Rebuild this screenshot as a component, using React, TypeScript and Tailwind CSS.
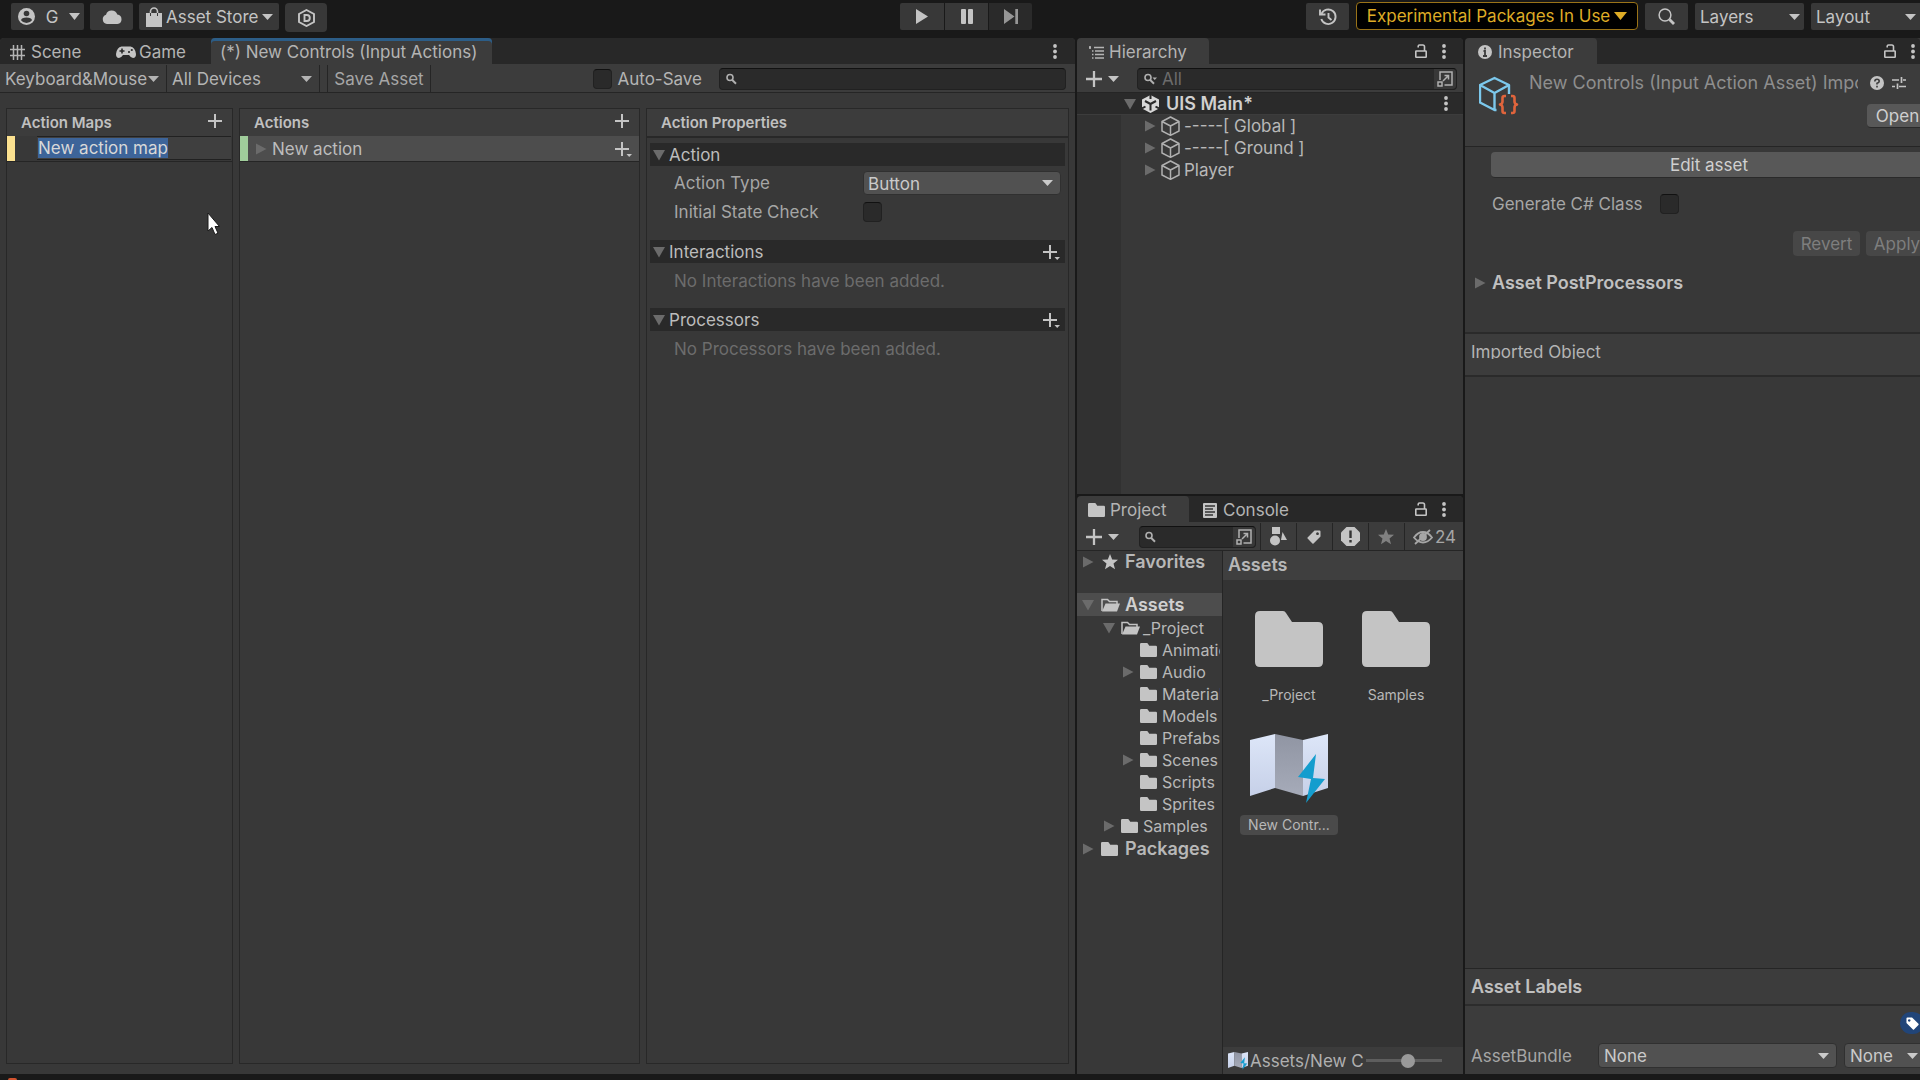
import React from 'react';

type IconProps = { className?: string };

type TreeItem = {
	label: string;
	depth: number;
	arrow?: 'open' | 'closed';
	openFolder?: boolean;
};

const treeItems: TreeItem[] = [
	{ label: '_Project', depth: 1, arrow: 'open', openFolder: true },
	{ label: 'Animations', depth: 2 },
	{ label: 'Audio', depth: 2, arrow: 'closed' },
	{ label: 'Materials', depth: 2 },
	{ label: 'Models', depth: 2 },
	{ label: 'Prefabs', depth: 2 },
	{ label: 'Scenes', depth: 2, arrow: 'closed' },
	{ label: 'Scripts', depth: 2 },
	{ label: 'Sprites', depth: 2 },
	{ label: 'Samples', depth: 1, arrow: 'closed' },
];

const sceneObjects = ['-----[ Global ]', '-----[ Ground ]', 'Player'];

const Caret = ({ className = 'w-[11px] h-[6px]' }: IconProps) => (
	<svg className={`shrink-0 ${className}`} viewBox="0 0 10 6" preserveAspectRatio="none" fill="currentColor" aria-hidden="true">
		<path d="M0 0h10L5 6z" />
	</svg>
);

const Foldout = ({ open = false }: { open?: boolean }) => (
	<svg className="w-3 h-3 shrink-0 text-[#6b6b6b]" viewBox="0 0 12 12" fill="currentColor" aria-hidden="true">
		{open ? <path d="M0 1h12L6 11.5z" /> : <path d="M1 0.5v11L11.5 6z" />}
	</svg>
);

const Plus = ({ className = 'w-[14px] h-[14px]' }: IconProps) => (
	<svg className={`shrink-0 ${className}`} viewBox="0 0 14 14" fill="none" stroke="currentColor" strokeWidth="2" aria-hidden="true">
		<path d="M7 0v14M0 7h14" />
	</svg>
);

const PlusMenu = () => (
	<svg className="w-[17px] h-4 shrink-0" viewBox="0 0 17 16" aria-hidden="true">
		<path d="M7 1v14M0 8h14" fill="none" stroke="currentColor" strokeWidth="2" />
		<path d="M11.500 13h5.500L14.200 16z" fill="currentColor" />
	</svg>
);

const Dots = () => (
	<svg className="w-1 h-[15px] shrink-0" viewBox="0 0 4 15" fill="currentColor" aria-hidden="true">
		<circle cx="2" cy="2" r="1.900" />
		<circle cx="2" cy="7.500" r="1.900" />
		<circle cx="2" cy="13" r="1.900" />
	</svg>
);

const Lock = () => (
	<svg className="w-3 h-[14px] shrink-0" viewBox="0 0 12 14" fill="none" stroke="currentColor" strokeWidth="1.600" aria-hidden="true">
		<rect x="0.800" y="7" width="10.400" height="6.200" rx="0.500" />
		<path d="M3.200 3.500V2.300Q3.200 1 4.500 1h3.300Q9.500 1 9.500 2.800V7" />
	</svg>
);

const SmallSearch = ({ menu = false }: { menu?: boolean }) => (
	<svg className="w-[13px] h-3 shrink-0" viewBox="0 0 13 12" aria-hidden="true">
		<circle cx="4" cy="4.500" r="3" fill="none" stroke="currentColor" strokeWidth="1.600" />
		<path d="M6 6.700l4 4" stroke="currentColor" strokeWidth="2" />
		{menu && <path d="M8.500 4.500H13L10.700 7z" fill="currentColor" />}
	</svg>
);

const OpenSearch = () => (
	<svg className="w-4 h-4 shrink-0" viewBox="0 0 16 16" fill="none" stroke="currentColor" strokeWidth="1.500" aria-hidden="true">
		<path d="M3 9V1h12v13H7.500" />
		<rect x="1" y="11" width="4" height="4" />
		<path d="M6 10l5.500-5.500M7.500 4.500h4v4" />
	</svg>
);

const Folder = ({ className = 'w-[17px] h-[14px]' }: IconProps) => (
	<svg className={`shrink-0 ${className}`} viewBox="0 0 68 56" preserveAspectRatio="none" fill="#c4c4c4" aria-hidden="true">
		<path d="M5 0h23q2 0 3 2l6 9h26q5 0 5 5v35q0 5-5 5H5q-5 0-5-5V5q0-5 5-5z" />
	</svg>
);

const FolderOpen = () => (
	<svg className="w-[19px] h-[14px] shrink-0" viewBox="0 0 19 14" aria-hidden="true">
		<path d="M1 13V1.500h5.500l2 2H16V6" fill="none" stroke="#c4c4c4" strokeWidth="1.500" />
		<path d="M4.500 5.500H19l-3 8H1z" fill="#c4c4c4" />
	</svg>
);

const Star = ({ className = 'text-[#c4c4c4]' }: IconProps) => (
	<svg className={`w-4 h-4 shrink-0 ${className}`} viewBox="0 0 16 16" fill="currentColor" aria-hidden="true">
		<path d="M8 0l2.200 5.400 5.800.4-4.500 3.700 1.500 5.700L8 12.100l-5 3.100 1.500-5.700L0 5.800l5.800-.4z" />
	</svg>
);

const Cube = () => (
	<svg className="w-[19px] h-5 shrink-0" viewBox="0 0 19 20" fill="none" stroke="#b0b0b0" strokeWidth="1.500" strokeLinejoin="round" aria-hidden="true">
		<path d="M9.500 1L18 5.500v9.500l-8.500 4.300L1 15V5.500zM1 5.500L9.500 10 18 5.500M9.500 10v9" />
	</svg>
);

const ActionsAsset = ({ className = 'w-[78px] h-[70px]' }: IconProps) => (
	<svg className={`shrink-0 ${className}`} viewBox="0 0 78 70" aria-hidden="true">
		<defs>
			<linearGradient id="page" x1="0" y1="0" x2="0" y2="1">
				<stop offset="0" stopColor="#dde6f8" />
				<stop offset="1" stopColor="#c6d0e8" />
			</linearGradient>
			<linearGradient id="fold" x1="0" y1="0" x2="0" y2="1">
				<stop offset="0" stopColor="#9095a3" />
				<stop offset="1" stopColor="#a6abb9" />
			</linearGradient>
		</defs>
		<path d="M0 6L25 0v54L0 62z" fill="url(#page)" />
		<path d="M25 0l28 6v56l-28-8z" fill="url(#fold)" />
		<path d="M53 6l25-6v54l-25 8z" fill="url(#page)" />
		<path d="M66 20L48 43l13 2-5 24 19-24-12-1z" fill="#149dce" />
	</svg>
);

const Tag = ({ className = 'w-[14px] h-[14px]' }: IconProps) => (
	<svg className={`shrink-0 ${className}`} viewBox="0 0 14 14" fill="currentColor" fillRule="evenodd" aria-hidden="true">
		<path d="M7.500.5h5q1 0 1 1v5L6.500 13.500Q6 14 5.400 13.400L.6 8.600Q0 8 .6 7.400zM10.500 2.300a1.400 1.400 0 1 0 .01 0z" />
	</svg>
);

type DropProps = {
	label: string;
	value: string;
	className: string;
	caretClass?: string;
};

const Dropdown = ({ label, value, className, caretClass = 'right-[7px]' }: DropProps) => (
	<div className={`relative flex items-center shrink-0 ${className}`}>
		<select aria-label={label} className="w-full h-full appearance-none bg-transparent pl-[5px] outline-none">
			<option>{value}</option>
		</select>
		<span className={`absolute pointer-events-none flex ${caretClass}`}>
			<Caret />
		</span>
	</div>
);

const checkbox = 'appearance-none shrink-0 w-[19px] h-5 rounded-sm bg-[#2a2a2a] border border-[#212121] border-t-[#111111]';
const tabBar = 'flex items-stretch h-[26px] shrink-0 bg-[#282828] rounded-t';
const toolbar = 'flex items-center h-[29px] shrink-0 bg-[#3c3c3c] border-b border-[#252525] pt-px';
const tab = 'flex items-center pt-0.5 whitespace-nowrap';
const activeTab = 'flex items-center pt-0.5 rounded-t bg-[#3c3c3c] whitespace-nowrap';

function TopBar() {
	return (
		<header className="flex items-start justify-between h-[38px] shrink-0 pt-[3px] text-[#c4c4c4]">
			<div className="flex-1 flex items-start pl-[11px] gap-[6px]">
				<button className="flex items-center justify-between w-[73px] h-[27px] pl-[7px] pr-1 bg-[#383838] rounded-xs">
					<svg className="w-[17px] h-[17px]" viewBox="0 0 17 17" aria-hidden="true">
						<circle cx="8.500" cy="8.500" r="8.500" fill="#c4c4c4" />
						<circle cx="8.500" cy="5.500" r="2.800" fill="#383838" />
						<path d="M3 12.200Q3.500 9.500 8.500 9.500T14 12.200Q12 15 8.500 15T3 12.200z" fill="#383838" />
					</svg>
					<span>G</span>
					<Caret className="w-[11px] h-[7px]" />
				</button>
				<button aria-label="Services" className="flex items-center justify-center w-[43px] h-[27px] bg-[#383838] rounded-xs">
					<svg className="w-5 h-[15px]" viewBox="0 0 20 15" fill="currentColor" aria-hidden="true">
						<path d="M5 15a4.800 4.800 0 0 1-1-9.300A6 6 0 0 1 15.300 5.500 4.800 4.800 0 0 1 15.500 15z" />
					</svg>
				</button>
				<button className="flex items-center w-[140px] h-[27px] pl-[7px] gap-1 bg-[#383838] rounded-xs">
					<svg className="w-4 h-5 shrink-0" viewBox="0 0 16 20" aria-hidden="true">
						<path d="M0 6h16v14H0z" fill="currentColor" />
						<path d="M4.500 9V4.500a3.500 3.500 0 0 1 7 0V9" fill="none" stroke="currentColor" strokeWidth="1.600" />
						<path d="M4.500 6v3M11.500 6v3" stroke="#383838" strokeWidth="1" />
					</svg>
					<span className="whitespace-nowrap">Asset Store</span>
					<Caret />
				</button>
				<button aria-label="Diagnostics" className="flex items-center justify-center w-[42px] h-[29px] bg-[#383838] rounded">
					<svg className="w-[17px] h-[18px]" viewBox="0 0 17 18" fill="none" stroke="currentColor" strokeWidth="1.900" aria-hidden="true">
						<path d="M8.500 1L16 5v8l-7.500 4L1 13V5z" />
						<path d="M6.500 6h2.300a3 3 0 0 1 0 6H6.500z" />
					</svg>
				</button>
			</div>

			<div className="flex gap-px mr-[5px]">
				<button aria-label="Play" className="flex items-center justify-center w-[44px] h-[27px] bg-[#383838] rounded-l-xs">
					<svg className="w-3 h-[15px]" viewBox="0 0 12 15" fill="currentColor" aria-hidden="true"><path d="M0 0l12 7.500L0 15z" /></svg>
				</button>
				<button aria-label="Pause" className="flex items-center justify-center w-[43px] h-[27px] bg-[#383838]">
					<svg className="w-3 h-[15px]" viewBox="0 0 12 15" fill="currentColor" aria-hidden="true">
						<rect width="5" height="15" rx="1" />
						<rect x="7" width="5" height="15" rx="1" />
					</svg>
				</button>
				<button aria-label="Step" className="flex items-center justify-center w-[43px] h-[27px] bg-[#2a2a2a] text-[#969696] rounded-r-xs">
					<svg className="w-[14px] h-[15px]" viewBox="0 0 14 15" fill="currentColor" aria-hidden="true"><path d="M0 0l10.500 7.500L0 15zM11.300 0H14v15h-2.700z" /></svg>
				</button>
			</div>

			<div className="flex-1 flex justify-end gap-[7px] -mr-[6px]">
				<button aria-label="Undo History" className="flex items-center justify-center w-[43px] h-[27px] bg-[#383838] rounded-xs">
					<svg className="w-[18px] h-[18px]" viewBox="0 0 18 18" fill="none" stroke="currentColor" strokeWidth="1.900" aria-hidden="true">
						<path d="M2.500 6A7.300 7.300 0 1 1 2.300 11" />
						<path d="M9.500 5v4.500l3 2.500" />
						<path d="M1 1.500v5h5.500" />
					</svg>
				</button>
				<button className="flex items-center justify-center gap-1 w-[282px] h-7 -mt-px rounded bg-black border border-[#9a7318] text-[#deac26] whitespace-nowrap">
					<span>Experimental Packages In Use</span>
					<Caret className="w-[13px] h-[8px]" />
				</button>
				<button aria-label="Search" className="flex items-center justify-center w-[43px] h-[27px] bg-[#383838] rounded-xs">
					<svg className="w-[17px] h-[17px]" viewBox="0 0 17 17" fill="none" stroke="currentColor" aria-hidden="true">
						<circle cx="7" cy="7" r="5.900" strokeWidth="1.500" />
						<path d="M11.500 11.500l4.500 4.500" strokeWidth="2.800" />
					</svg>
				</button>
				<Dropdown label="Layers" value="Layers" className="w-[109px] h-[27px] bg-[#383838] rounded-xs" caretClass="right-1" />
				<Dropdown label="Layout" value="Layout" className="w-[115px] h-[27px] bg-[#383838] rounded-xs" caretClass="right-[10px]" />
			</div>
		</header>
	);
}

function SectionHeader({ title, add = false }: { title: string; add?: boolean }) {
	return (
		<div className="flex items-center h-[23px] pl-[3px] pr-[5px] gap-1 bg-[#292929] text-[#bcbcbc]">
			<Foldout open />
			<h3 className="flex-1">{title}</h3>
			{add && (
				<button aria-label={`Add to ${title}`} className="text-[#c4c4c4]"><PlusMenu /></button>
			)}
		</div>
	);
}

function InputActions() {
	const nameRef = React.useRef<HTMLInputElement>(null);

	React.useEffect(() => {
		nameRef.current?.focus();
		nameRef.current?.select();
	}, []);

	return (
		<main className="flex-1 min-w-0 flex flex-col bg-[#383838] rounded-t overflow-hidden">
			<div className={tabBar}>
				<button className={`${tab} w-[105px] pl-[10px] gap-[6px]`}>
					<svg className="w-[15px] h-[15px]" viewBox="0 0 15 15" fill="none" stroke="#b4b4b4" strokeWidth="1.500" aria-hidden="true">
						<path d="M3.500 0v15M7.500 0v15M11.500 0v15M0 4.500h15M0 10.500h15" />
					</svg>
					Scene
				</button>
				<button className={`${tab} w-[106px] pl-[11px] gap-[3px]`}>
					<svg className="w-5 h-3" viewBox="0 0 20 12" aria-hidden="true">
						<path d="M5.500.5h9Q19 1 20 8q0 4-3 4-2 0-4-3H7q-2 3-4 3-3 0-3-4Q1 1 5.500.5z" fill="#c4c4c4" />
						<path d="M6 2.500v5M3.500 5h5" stroke="#282828" strokeWidth="1.600" />
						<circle cx="13" cy="6" r="1.100" fill="#282828" />
						<circle cx="15.800" cy="4" r="1.100" fill="#282828" />
					</svg>
					Game
				</button>
				<button className={`${activeTab} w-[281px] pl-[9px] shadow-[inset_0_3px_0_#2c5d87]`}>
					(*) New Controls (Input Actions)
				</button>
				<button aria-label="Tab menu" className="ml-auto mr-[18px] text-[#c4c4c4]"><Dots /></button>
			</div>

			<div className={toolbar}>
				<Dropdown label="Control scheme" value="Keyboard&Mouse" className="w-[167px] h-full border-r border-[#252525]" />
				<Dropdown label="Devices" value="All Devices" className="w-[153px] h-full border-r border-[#252525]" />
				<button className="h-full w-[104px] ml-[7px] border-x border-[#252525] text-[#a6a6a6]">Save Asset</button>
				<label className="flex items-center gap-[5px] ml-auto whitespace-nowrap">
					<input type="checkbox" className={checkbox} />
					Auto-Save
				</label>
				<div className="flex items-center w-[347px] h-[22px] ml-[17px] mr-[9px] pl-[6px] gap-1 rounded bg-[#2a2a2a] border border-[#212121] border-t-[#111111] text-[#b0b0b0]">
					<SmallSearch />
					<input aria-label="Search actions" className="flex-1 min-w-0 bg-transparent outline-none" />
				</div>
			</div>

			<div className="flex-1 flex gap-[6px] pt-[15px] px-[6px] pb-[10px]">
				<section className="w-[227px] shrink-0 border border-[#282828]">
					<div className="flex items-center justify-between h-[27px] pl-[14px] pr-[10px] bg-[#3c3c3c]">
						<h2 className="text-[15px] font-semibold text-[#c0c0c0]">Action Maps</h2>
						<button aria-label="Add action map" className="pb-[3px] text-[#c4c4c4]"><Plus /></button>
					</div>
					<div className="flex h-[26px] border-b border-[#252525]">
						<span className="w-2 bg-[#fbe190]" />
						<input
							ref={nameRef}
							aria-label="Action map name"
							defaultValue="New action map"
							className="flex-1 min-w-0 ml-[22px] mr-px h-6 leading-[22px] px-px bg-[#3f3f3f] text-[#d8d8d8] border-y border-[#212121] outline-none selection:bg-[#3d6499] selection:text-[#d8d8d8]"
						/>
					</div>
				</section>

				<section className="flex-[401] min-w-0 border border-[#282828]">
					<div className="flex items-center justify-between h-[27px] pl-[14px] pr-[10px] bg-[#3c3c3c]">
						<h2 className="text-[15px] font-semibold text-[#c0c0c0]">Actions</h2>
						<button aria-label="Add action" className="pb-[3px] text-[#c4c4c4]"><Plus /></button>
					</div>
					<div className="flex items-center h-[26px] pr-[7px] border-b border-[#252525] bg-[#4d4d4d] text-[#bcbcbc]">
						<span className="w-2 self-stretch bg-[#a0cd9b]" />
						<span className="flex ml-[7px] mr-[5px]"><Foldout /></span>
						<span className="flex-1">New action</span>
						<button aria-label="Add binding" className="text-[#c4c4c4]"><PlusMenu /></button>
					</div>
				</section>

				<section className="flex-[423] min-w-0 border border-[#282828]">
					<h2 className="flex items-center h-[29px] pl-[14px] bg-[#3c3c3c] border-b-2 border-[#282828] text-[15px] font-semibold text-[#c0c0c0]">
						Action Properties
					</h2>
					<div className="px-[3px] pt-[5px]">
						<SectionHeader title="Action" />
						<div className="grid grid-cols-[189px_1fr] gap-y-[5px] pl-6 pr-1 pt-[5px] pb-4 items-center text-[#a6a6a6]">
							<label htmlFor="action-type">Action Type</label>
							<div className="relative flex items-center h-6 rounded bg-[#515151] border border-[#303030] text-[#cacaca]">
								<select id="action-type" className="w-full h-full appearance-none bg-transparent pl-1 outline-none">
									<option>Button</option>
								</select>
								<span className="absolute right-[7px] pointer-events-none flex"><Caret /></span>
							</div>
							<label htmlFor="initial-state">Initial State Check</label>
							<input id="initial-state" type="checkbox" className={checkbox} />
						</div>
						<SectionHeader title="Interactions" add />
						<p className="pl-6 pt-[6px] pb-[15px] text-[#6c6c6c]">No Interactions have been added.</p>
						<SectionHeader title="Processors" add />
						<p className="pl-6 pt-[6px] text-[#6c6c6c]">No Processors have been added.</p>
					</div>
				</section>
			</div>
		</main>
	);
}

function Hierarchy() {
	return (
		<section className="h-[456px] shrink-0 flex flex-col bg-[#383838] rounded-t overflow-hidden">
			<div className={tabBar}>
				<button className={`${activeTab} w-[132px] pl-3 gap-[5px]`}>
					<svg className="w-[15px] h-[13px]" viewBox="0 0 15 13" fill="none" stroke="#b4b4b4" strokeWidth="1.600" aria-hidden="true">
						<path d="M0 1.500h2M5 1.500h10M3 5h1.500M6 5h9M3 8.500h1.500M6 8.500h9M3 12h1.500M6 12h9M1 0v3" />
					</svg>
					Hierarchy
				</button>
				<div className="flex items-center gap-[15px] ml-auto mr-[17px] text-[#c4c4c4]">
					<button aria-label="Lock"><Lock /></button>
					<button aria-label="Tab menu"><Dots /></button>
				</div>
			</div>
			<div className={toolbar}>
				<button aria-label="Create" className="flex items-center gap-[6px] ml-[9px] text-[#c4c4c4]">
					<Plus className="w-4 h-4" />
					<Caret />
				</button>
				<div className="flex-1 flex items-center h-[22px] ml-[18px] mr-[6px] pl-[6px] gap-[5px] rounded bg-[#2a2a2a] border border-[#212121] border-t-[#111111] text-[#b0b0b0]">
					<SmallSearch menu />
					<input aria-label="Search hierarchy" placeholder="All" className="flex-1 min-w-0 bg-transparent outline-none placeholder:text-[#6c6c6c]" />
					<button aria-label="Open in search" className="flex items-center h-full px-[3px] rounded-r bg-[#383838]"><OpenSearch /></button>
				</div>
			</div>
			<div className="flex items-center h-[22px] shrink-0 pl-[47px] pr-[15px] bg-[#2a2a2a] border-b border-[#3c3c3c] text-[18px] font-semibold text-[#d0d0d0]">
				<Foldout open />
				<svg className="w-[17px] h-[18px] ml-[6px] mr-[7px]" viewBox="0 0 17 18" aria-hidden="true">
					<path d="M8.500 0L17 4.500v9L8.500 18 0 13.500v-9z" fill="#d8d8d8" />
					<path d="M8.500 9v6.500M8.500 9L3 6M8.500 9L14 6" stroke="#2a2a2a" strokeWidth="2" />
					<path d="M8.500 0v4M0 13.500l3.500-2M17 13.500l-3.500-2" stroke="#2a2a2a" strokeWidth="2" />
				</svg>
				<span className="flex-1">UIS Main*</span>
				<button aria-label="Scene menu" className="text-[#c4c4c4]"><Dots /></button>
			</div>
			<div className="flex-1 flex">
				<div className="w-11 bg-[#313131]" />
				<ul className="flex-1 pl-[23px]">
					{sceneObjects.map((name) => (
						<li key={name} className="flex items-center h-[22px] text-[#b8b8b8]">
							<Foldout />
							<span className="flex ml-[5px] mr-1"><Cube /></span>
							{name}
						</li>
					))}
				</ul>
			</div>
		</section>
	);
}

function Project() {
	const filter = 'flex items-center justify-center w-9 h-full border-l border-[#252525]';
	return (
		<section className="flex-1 min-h-0 flex flex-col bg-[#383838] rounded-t overflow-hidden">
			<div className={tabBar}>
				<button className={`${activeTab} w-[112px] pl-[11px] gap-[5px]`}>
					<Folder />
					Project
				</button>
				<button className={`${tab} pl-[14px] gap-[6px]`}>
					<svg className="w-[14px] h-[15px]" viewBox="0 0 14 15" aria-hidden="true">
						<rect width="14" height="15" rx="1" fill="#c4c4c4" />
						<path d="M2 3h10M2 6h8M2 9h10M2 12h8" stroke="#333333" strokeWidth="1.300" />
					</svg>
					Console
				</button>
				<div className="flex items-center gap-[15px] ml-auto mr-[17px] text-[#c4c4c4]">
					<button aria-label="Lock"><Lock /></button>
					<button aria-label="Tab menu"><Dots /></button>
				</div>
			</div>
			<div className={`${toolbar} text-[#c4c4c4]`}>
				<button aria-label="Create" className="flex items-center gap-[6px] ml-[9px] mr-5">
					<Plus className="w-4 h-4" />
					<Caret />
				</button>
				<div className="flex-1 min-w-0 flex items-center h-[22px] mr-1 pl-[5px] rounded bg-[#2a2a2a] border border-[#212121] border-t-[#111111] text-[#b0b0b0]">
					<SmallSearch />
					<input aria-label="Search project" className="flex-1 min-w-0 bg-transparent outline-none" />
					<button aria-label="Open in search" className="flex items-center h-full px-[3px] rounded-r bg-[#383838]"><OpenSearch /></button>
				</div>
				<button aria-label="Search by type" className={filter}>
					<svg className="w-[17px] h-[19px]" viewBox="0 0 17 19" fill="currentColor" aria-hidden="true">
						<path d="M2 0h8v7H2zM12.500 5L17 13h-6z" />
						<circle cx="5" cy="13.500" r="5" />
					</svg>
				</button>
				<button aria-label="Search by label" className={filter}><Tag /></button>
				<button aria-label="Search by import log" className={filter}>
					<svg className="w-[19px] h-[19px]" viewBox="0 0 19 19" aria-hidden="true">
						<path d="M5.500 0h8L19 5.500v8L13.500 19h-8L0 13.500v-8z" fill="#c4c4c4" />
						<path d="M9.500 3.500v7.500M9.500 13v2.500" stroke="#333333" strokeWidth="2.400" />
					</svg>
				</button>
				<button aria-label="Save search" className={filter}><Star className="text-[#808080]" /></button>
				<button aria-label="Hidden packages" className="flex items-center h-full pl-2 pr-[7px] gap-0.5 border-l border-[#252525] text-[#a6a6a6]">
					<svg className="w-5 h-4" viewBox="0 0 20 16" fill="none" stroke="currentColor" strokeWidth="1.800" aria-hidden="true">
						<path d="M1 8.500Q5 3 10 3t9 5.500Q15 13.500 10 13.500T1 8.500zM2 15L17 1" />
						<circle cx="10" cy="8" r="3" fill="currentColor" />
					</svg>
					24
				</button>
			</div>

			<div className="flex-1 min-h-0 flex">
				<nav className="w-[146px] shrink-0 overflow-hidden border-r border-[#252525] text-[#b8b8b8]">
					<div className="flex items-center h-[22px] mb-5 pl-[5px] text-[18px] font-semibold">
						<Foldout />
						<span className="flex ml-2 mr-[7px]"><Star /></span>
						Favorites
					</div>
					<div className="flex items-center h-[23px] pl-[5px] bg-[#4d4d4d] text-[18px] font-semibold text-[#d0d0d0]">
						<Foldout open />
						<span className="flex ml-[7px] mr-[5px]"><FolderOpen /></span>
						Assets
					</div>
					<ul className="mr-0.5 pt-px overflow-hidden text-[16px]">
						{treeItems.map((item) => (
							<li key={item.label} className={`flex items-center h-[22px] whitespace-nowrap ${item.depth === 2 ? 'pl-[45px]' : 'pl-[26px]'}`}>
								<span className="flex w-3 shrink-0 mr-[6px]">
									{item.arrow && <Foldout open={item.arrow === 'open'} />}
								</span>
								<span className="flex w-[22px] shrink-0">{item.openFolder ? <FolderOpen /> : <Folder />}</span>
								{item.label}
							</li>
						))}
					</ul>
					<div className="flex items-center h-[23px] pl-[5px] text-[18px] font-semibold">
						<Foldout />
						<span className="flex ml-[7px] mr-[7px]"><Folder /></span>
						Packages
					</div>
				</nav>

				<div className="flex-1 min-w-0 flex flex-col bg-[#333333]">
					<h2 className="flex items-center h-[29px] shrink-0 pl-[5px] pb-px bg-[#3f3f3f] text-[18px] font-semibold text-[#b8b8b8]">Assets</h2>
					<ul className="flex-1 flex flex-wrap content-start gap-x-[9px] gap-y-5 pl-[17px] pt-[21px] text-[14px] leading-5 text-[#b8b8b8]">
						{['_Project', 'Samples'].map((name) => (
							<li key={name} className="flex flex-col items-center justify-between w-[98px] h-[104px] pt-[10px]">
								<Folder className="w-[68px] h-[56px]" />
								{name}
							</li>
						))}
						<li className="flex flex-col items-center justify-between w-[98px] h-[110px] pt-[9px]">
							<ActionsAsset />
							<span className="w-full text-center rounded bg-[#4a4a4a]">New Contr...</span>
						</li>
					</ul>
					<footer className="flex items-center h-[27px] shrink-0 pl-[5px] pr-[22px] gap-0.5 bg-[#3c3c3c] text-[#b0b0b0]">
						<ActionsAsset className="w-5 h-[18px]" />
						<span className="flex-1 whitespace-nowrap">Assets/New C</span>
						<input
							type="range"
							aria-label="Icon size"
							defaultValue={57}
							className="appearance-none w-[76px] h-[3px] bg-[#5e5e5e] [&::-webkit-slider-thumb]:appearance-none [&::-webkit-slider-thumb]:w-[14px] [&::-webkit-slider-thumb]:h-[14px] [&::-webkit-slider-thumb]:rounded-full [&::-webkit-slider-thumb]:bg-[#999999]"
						/>
					</footer>
				</div>
			</div>
		</section>
	);
}

function Inspector() {
	return (
		<aside className="w-[455px] shrink-0 flex flex-col bg-[#383838] rounded-tl overflow-hidden">
			<div className={tabBar}>
				<button className={`${activeTab} w-[132px] pl-[13px] gap-[6px]`}>
					<svg className="w-[14px] h-[14px]" viewBox="0 0 14 14" aria-hidden="true">
						<circle cx="7" cy="7" r="7" fill="#c4c4c4" />
						<path d="M7 2.500v2M5.500 6H7v5M5 11h4" fill="none" stroke="#3c3c3c" strokeWidth="1.800" />
					</svg>
					Inspector
				</button>
				<div className="flex items-center gap-[15px] ml-auto mr-[5px] text-[#c4c4c4]">
					<button aria-label="Lock"><Lock /></button>
					<button aria-label="Tab menu"><Dots /></button>
				</div>
			</div>

			<div className="flex h-[83px] shrink-0 pl-[14px] bg-[#3c3c3c] border-b border-[#252525]">
				<svg className="w-10 h-10 mt-3 shrink-0" viewBox="0 0 40 40" fill="none" strokeWidth="2.400" strokeLinejoin="round" aria-hidden="true">
					<path d="M30 18V9L15.500 2 1 9v17.500L15.500 34h2M1 9l14.500 8L30 9M15.500 17v17" stroke="#7cc8ec" />
					<path d="M27 20h-1.500q-2 0-2 2v3.500q0 2.500-2.500 3 2.500.5 2.500 3V35q0 2 2 2H27M32 20h1.500q2 0 2 2v3.500q0 2.500 2.500 3-2.500.5-2.500 3V35q0 2-2 2H32" stroke="#e0643c" strokeWidth="2.600" />
				</svg>
				<div className="flex-1 min-w-0 flex flex-col justify-between pl-[10px] pt-[6px] pb-[18px]">
					<div className="flex items-center pr-[14px] text-[#c4c4c4]">
						<h2 className="w-[331px] overflow-hidden whitespace-nowrap text-[18px] leading-[26px] text-[#8e8e8e]">New Controls (Input Action Asset) Import Settings</h2>
						<svg className="w-[14px] h-[14px] ml-3 shrink-0" viewBox="0 0 14 14" aria-hidden="true">
							<circle cx="7" cy="7" r="7" fill="#c4c4c4" />
							<path d="M4.800 5.500Q4.800 3.200 7 3.200t2.200 2Q9.200 6.500 7 7.300V8.500M7 9.800v1.700" fill="none" stroke="#3c3c3c" strokeWidth="1.600" />
						</svg>
						<svg className="w-[14px] h-3 ml-2 shrink-0" viewBox="0 0 14 12" stroke="currentColor" strokeWidth="1.700" aria-hidden="true">
							<path d="M0 3h7M11 3h3M9.500 0v6M0 9.500h3M7 9.500h7M5.500 6.500v6" />
						</svg>
					</div>
					<button className="self-end w-[61px] h-6 -mr-2 rounded bg-[#585858] border-b border-[#2a2a2a] text-[#d0d0d0]">Open</button>
				</div>
			</div>

			<div className="shrink-0 h-[185px] pt-[5px] pl-[9px] text-[#b0b0b0]">
				<div className="pl-[17px]">
					<div className="flex -mr-[7px]">
						<button className="flex-1 h-[26px] rounded bg-[#585858] border-b border-[#2a2a2a] text-[#d0d0d0]">Edit asset</button>
					</div>
					<label className="flex items-center pt-[14px] pl-px text-[#a6a6a6]">
						<span className="w-[168px]">Generate C# Class</span>
						<input type="checkbox" className={checkbox} />
					</label>
					<div className="flex justify-end gap-[6px] -mr-2 pt-[15px]">
						<button disabled className="w-[67px] h-[25px] rounded bg-[#474747] text-[#7e7e7e]">Revert</button>
						<button disabled className="w-[62px] h-[25px] rounded bg-[#474747] text-[#7e7e7e]">Apply</button>
					</div>
				</div>
				<div className="flex items-center gap-[6px] pt-[15px]">
					<Foldout />
					<h3 className="text-[18px] font-semibold text-[#c0c0c0]">Asset PostProcessors</h3>
				</div>
			</div>

			<div className="h-[45px] shrink-0 border-y-2 border-[#2a2a2a] bg-[#3c3c3c] pl-[6px] pt-[6px]">
				<h3 className="h-[19px] overflow-hidden leading-6 text-[#b4b4b4]">Imported Object</h3>
			</div>
			<div className="flex-1" />

			<div className="shrink-0 bg-[#3c3c3c] border-t border-[#252525]">
				<h3 className="flex items-center h-[37px] pl-[6px] border-b-2 border-[#2c2c2c] text-[18px] font-semibold text-[#c0c0c0]">Asset Labels</h3>
				<div className="flex justify-end pt-[6px] -mr-1">
					<button aria-label="Edit labels" className="flex items-center justify-center w-6 h-[22px] rounded-full bg-[#214579] text-white">
						<Tag className="w-[13px] h-[13px] -scale-x-100" />
					</button>
				</div>
				<div className="flex items-center gap-[7px] pl-[6px] pt-[9px] pb-[6px] -mr-[7px] text-[#cacaca]">
					<span className="flex-1 text-[#a6a6a6]">AssetBundle</span>
					<Dropdown label="AssetBundle" value="None" className="w-[239px] h-[25px] rounded bg-[#515151] border border-[#303030]" />
					<Dropdown label="AssetBundle variant" value="None" className="w-[83px] h-[25px] rounded bg-[#515151] border border-[#303030]" caretClass="right-2" />
				</div>
			</div>
		</aside>
	);
}

export default function App() {
	return (
		<div className="flex flex-col h-screen min-h-[640px] overflow-hidden bg-[#191919] font-['Inter','Liberation_Sans',sans-serif] text-[17px] leading-6 text-[#b4b4b4]">
			<TopBar />
			<div className="flex-1 min-h-0 flex gap-0.5">
				<InputActions />
				<div className="w-[386px] shrink-0 flex flex-col gap-0.5">
					<Hierarchy />
					<Project />
				</div>
				<Inspector />
			</div>
			<footer className="h-[6px] shrink-0 overflow-hidden pl-2 pt-1">
				<div className="w-[9px] h-3 rounded-xs bg-[#d2532f]" />
			</footer>
			{/* Mouse pointer */}
			<svg className="absolute left-[207px] top-[212px] w-[13px] h-[24px]" viewBox="0 0 13 24" aria-hidden="true">
				<path d="M1 1v18l4-3.500L8 22.500l3-1.300L8 14.500h4.500z" fill="#ffffff" stroke="#1a1a1a" strokeWidth="1" />
			</svg>
		</div>
	);
}
